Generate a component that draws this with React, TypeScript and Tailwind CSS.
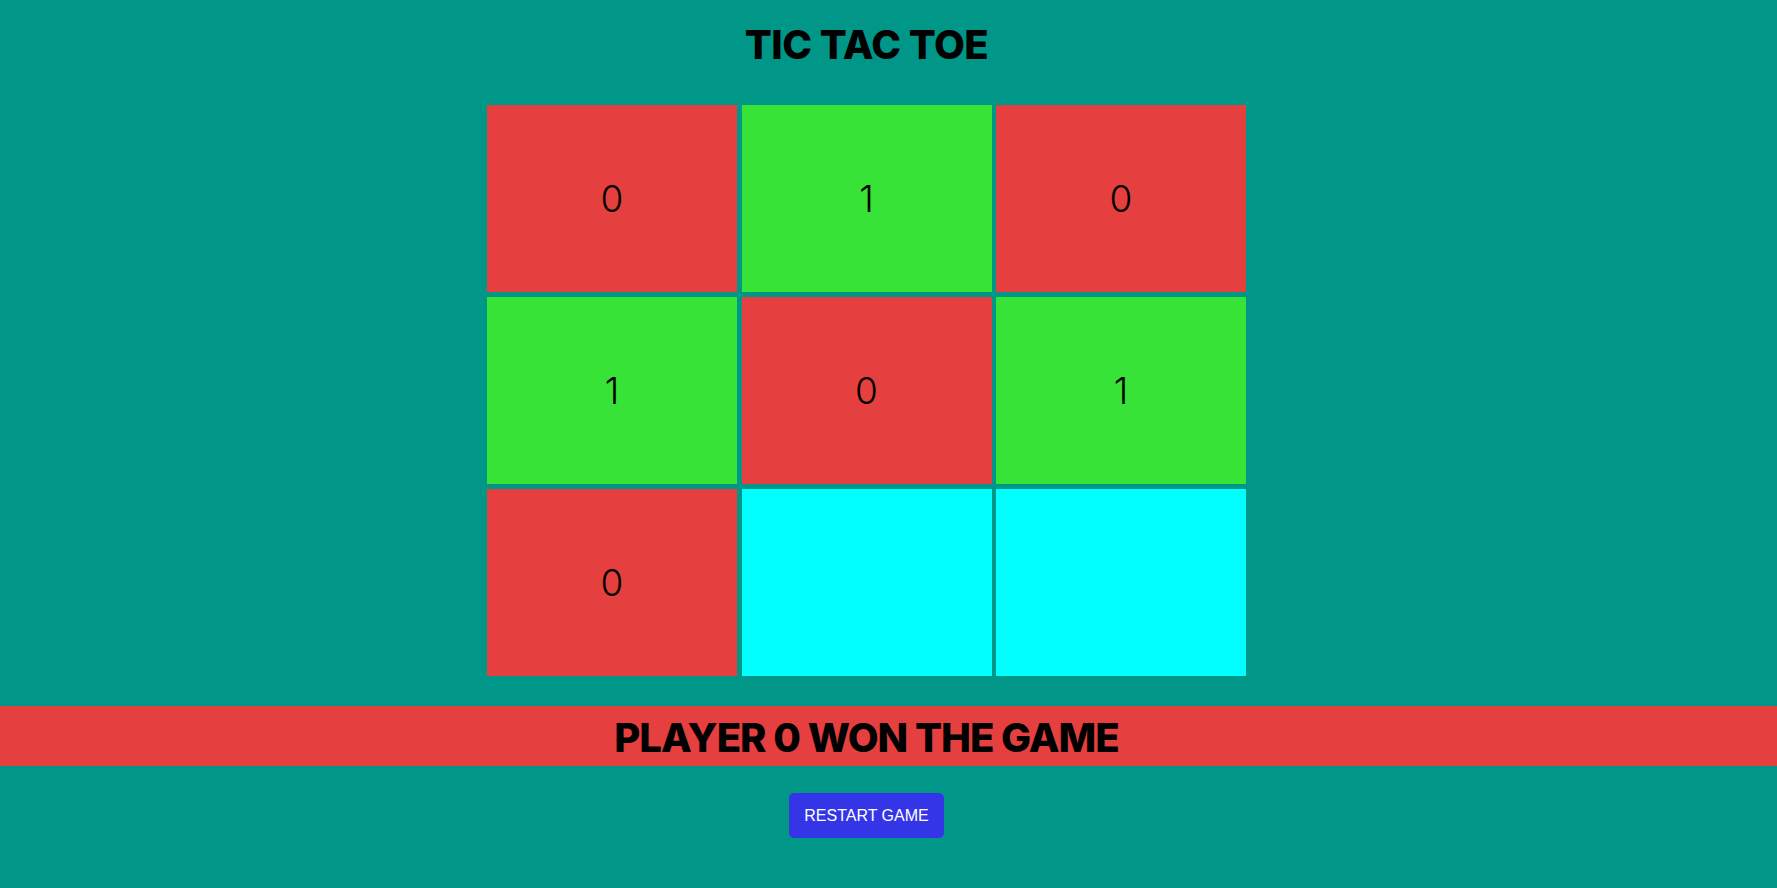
import React from "react";

type Cell = "0" | "1" | null;

const board: Cell[] = ["0", "1", "0", "1", "0", "1", "0", null, null];

function cellColor(v: Cell) {
  if (v === "0") return "bg-[#e53f3f]";
  if (v === "1") return "bg-[#36e336]";
  return "bg-[#00ffff]";
}

export default function App() {
  return (
    <div className="min-h-screen w-full bg-[#009688] font-['Inter',sans-serif] text-black">
      <div className="flex w-[1733px] flex-col items-center">
        <div className="flex h-[89px] items-center">
          <h1 className="text-[40px] leading-none font-extrabold tracking-[-0.5px]">
            TIC TAC TOE
          </h1>
        </div>
        <div className="mt-[16px] grid grid-cols-[250px_250px_250px] gap-x-[4.5px] gap-y-[5px]">
          {board.map((v, i) => (
            <div
              key={i}
              className={`flex h-[187px] items-center justify-center ${cellColor(v)}`}
            >
              <span className="text-[37px] leading-none font-light">{v}</span>
            </div>
          ))}
        </div>
      </div>
      <div className="mt-[30px] flex h-[60px] w-full items-center bg-[#e53f3f]">
        <div className="flex w-[1733px] justify-center pt-[3px]">
          <h2 className="text-[40px] leading-none font-extrabold tracking-[-1px]">
            PLAYER 0 WON THE GAME
          </h2>
        </div>
      </div>
      <div className="flex w-[1733px] justify-center">
        <button className="mt-[27px] flex h-[45px] w-[155px] items-center justify-center rounded-[5px] bg-[#3535e8] font-['Liberation_Sans',sans-serif] text-[16px] text-white">
          RESTART GAME
        </button>
      </div>
    </div>
  );
}
